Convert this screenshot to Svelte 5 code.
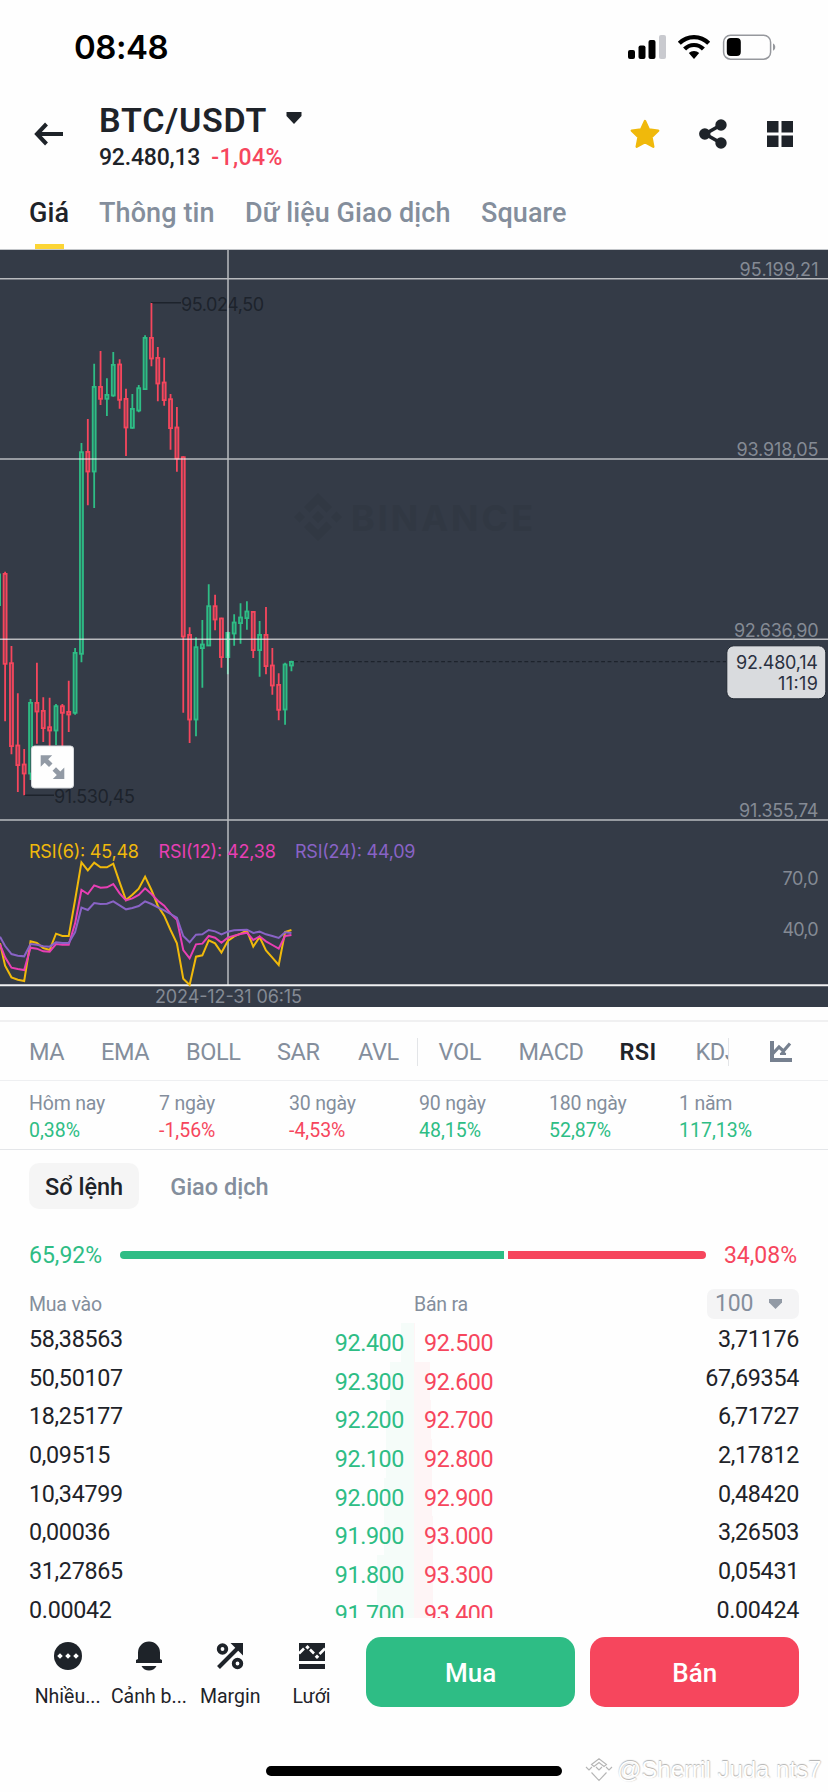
<script>
    const STEP = 6.363;
    const FIRST_X = 5.1;

    const tabs = ['Giá', 'Thông tin', 'Dữ liệu Giao dịch', 'Square'];
    const mainIndicators = ['MA', 'EMA', 'BOLL', 'SAR', 'AVL'];
    const subIndicators = ['VOL', 'MACD', 'RSI', 'KDJ'];

    const changes = [
        ['Hôm nay', '0,38%'],
        ['7 ngày', '-1,56%'],
        ['30 ngày', '-4,53%'],
        ['90 ngày', '48,15%'],
        ['180 ngày', '52,87%'],
        ['1 năm', '117,13%']
    ];

    // amount, bid, ask, amount, bid depth, ask depth
    const orders = [
        ['58,38563', '92.400', '92.500', '3,71176', 13, 1],
        ['50,50107', '92.300', '92.600', '67,69354', 24, 16],
        ['18,25177', '92.200', '92.700', '6,71727', 28, 17],
        ['0,09515', '92.100', '92.800', '2,17812', 28, 18],
        ['10,34799', '92.000', '92.900', '0,48420', 30, 18],
        ['0,00036', '91.900', '93.000', '3,26503', 30, 19],
        ['31,27865', '91.800', '93.300', '0,05431', 37, 19],
        ['0.00042', '91.700', '93.400', '0.00424', 37, 19]
    ];

    // up / down, wick top, body top, body bottom, wick bottom
    const candles = [
        ['d', 321.7, 323.7, 414, 471.3],
        ['d', 396, 413, 496.3, 504.3],
        ['d', 443.3, 495.3, 515.3, 542],
        ['d', 499, 514.3, 523.7, 545.3],
        ['u', 449, 452.7, 523.7, 530],
        ['d', 412.7, 452.7, 461.7, 493.7],
        ['d', 447.3, 460.7, 478.3, 492],
        ['d', 447.7, 477, 480.7, 510],
        ['u', 454, 456, 480.7, 495],
        ['d', 454, 456, 463, 510],
        ['d', 430.7, 461.7, 464.7, 482],
        ['u', 398, 402.7, 463, 464.7],
        ['u', 193, 202, 404, 412.3],
        ['d', 169, 201.7, 221.7, 255.3],
        ['u', 113.7, 136.7, 221.7, 258],
        ['d', 101, 136.7, 149, 155],
        ['u', 128.3, 144.7, 149, 166],
        ['u', 102, 114.7, 145.7, 146.7],
        ['d', 109.3, 114.3, 150, 158.7],
        ['d', 138.7, 148.7, 177.7, 206],
        ['u', 144, 158.7, 178, 178.7],
        ['u', 135, 138, 160.7, 162.3],
        ['u', 85.3, 87.7, 139.3, 140],
        ['d', 53, 87.7, 108.7, 116.3],
        ['d', 97, 107.7, 133.7, 151.3],
        ['d', 107.7, 132.3, 150.3, 155.7],
        ['d', 144, 149, 178.3, 199.7],
        ['d', 157, 177.3, 208.7, 221.7],
        ['d', 206.3, 207, 386.7, 462.7],
        ['d', 377.3, 384.7, 469.7, 493],
        ['u', 387.3, 397, 469.7, 486.3],
        ['u', 370, 394.3, 398.3, 437.7],
        ['u', 334.3, 356, 395.7, 396],
        ['d', 344.7, 356, 369.7, 380.3],
        ['d', 367.7, 368.3, 407.3, 417.7],
        ['u', 381.7, 382.7, 407.3, 424.3],
        ['u', 364.3, 372.3, 383.7, 395.7],
        ['u', 353.3, 367.3, 373.3, 393.7],
        ['u', 351.3, 361.3, 368.3, 379.7],
        ['d', 361.3, 361.7, 400.3, 408],
        ['u', 371, 384.7, 400.3, 426.7],
        ['d', 357, 384.7, 416.3, 424.3],
        ['d', 398, 415.3, 435.7, 444.7],
        ['d', 423.3, 434.7, 460, 470.3],
        ['u', 412.7, 414.3, 459.7, 474.7],
        ['u', 410.7, 411.7, 415.7, 421.3]
    ];
    const selected = 35;

    // first value sits on the left edge, the rest follow the candles
    const rsi6 = [400, 467, 502, 509, 513, 394, 399, 414, 420, 371, 378, 378, 270, 157, 181, 158, 172, 172, 161, 217, 270, 254, 236, 200, 240, 287, 317, 360, 400, 506, 525, 440, 436, 391, 400, 428, 393, 379, 371, 362, 410, 381, 421, 443, 465, 366, 360];
    const rsi12 = [403, 442, 473, 477, 480, 413, 416, 424, 425, 402, 404, 404, 340, 240, 252, 226, 233, 232, 222, 250, 271, 265, 255, 235, 252, 272, 287, 311, 329, 420, 445, 403, 401, 378, 383, 398, 383, 377, 372, 368, 390, 379, 394, 405, 416, 378, 375];
    const rsi24 = [380, 408, 432, 437, 439, 402, 404, 409, 410, 397, 399, 399, 366, 293, 300, 279, 282, 281, 274, 286, 298, 294, 288, 274, 282, 292, 301, 312, 323, 378, 397, 374, 373, 360, 364, 373, 365, 361, 360, 359, 369, 365, 373, 378, 384, 367, 369];

    function candleX(i) {
        return FIRST_X + STEP * i;
    }

    function linePoints(values) {
        return values.map((v, i) => `${i ? candleX(i - 1) : 0},${560 + v / 3}`).join(' ');
    }
</script>

<main>
    <div class="status">
        <span class="time">08:48</span>
        <svg class="status-icons" width="150" height="28" viewBox="0 0 150 28">
            <rect x="1" y="17" width="7" height="9" rx="2" />
            <rect x="11.5" y="12.500" width="7" height="13.500" rx="2" />
            <rect x="21.500" y="7" width="7" height="19" rx="2" />
            <rect x="32" y="2" width="7" height="24" rx="2" fill="#c9cacf" />
            <g fill="none" stroke="#000" stroke-width="4.200">
                <path d="M52.300 10.300a20.500 20.500 0 0 1 29.400 0" />
                <path d="M57.600 16a13 13 0 0 1 18.800 0" />
            </g>
            <path d="M61.800 20a7.600 7.600 0 0 1 10.400 0L67 26z" />
            <rect x="96.600" y="2.200" width="47" height="24" rx="7" fill="none" stroke="#96989d" stroke-width="1.500" />
            <rect x="99.800" y="5" width="14" height="18" rx="4" />
            <path d="M146 10.500c3 1.200 3 6 0 7.200z" fill="#96989d" />
        </svg>
    </div>

    <header>
        <svg class="back" width="30" height="24" viewBox="0 0 30 24" fill="none" stroke="#1e2329" stroke-width="4">
            <path d="M12.500 2L3 12l9.500 10M3 12h26" />
        </svg>
        <div class="pair">
            <h1>
                BTC/USDT
                <svg width="16" height="12" viewBox="0 0 16 12"><path d="M.5 0h15v4L8 12 .5 4z" fill="#1e2329" /></svg>
            </h1>
            <div class="last"><span>92.480,13</span><span class="down pct">-1,04%</span></div>
        </div>
        <div class="actions">
            <svg width="30" height="30" viewBox="0 0 30 30"><path d="M15 2l3.900 8.400 9.300 1.300-6.700 6.500 1.800 9.500L15 23.200l-8.300 4.500 1.800-9.500-6.700-6.500 9.300-1.300z" fill="#f0b90b" stroke="#f0b90b" stroke-width="2.400" stroke-linejoin="round" /></svg>
            <svg width="30" height="30" viewBox="0 0 30 30" fill="#1e2329">
                <path d="M23 6L7 15l16 9" fill="none" stroke="#1e2329" stroke-width="3.600" />
                <circle cx="23" cy="6" r="5.700" /><circle cx="6.800" cy="15" r="5.700" /><circle cx="23" cy="24" r="5.700" />
            </svg>
            <svg width="28" height="28" viewBox="0 0 28 28" fill="#1e2329">
                <path d="M1 1h11.500v11.500H1zM15.500 1H27v11.500H15.500zM1 15.500h11.500V27H1zM15.500 15.500H27V27H15.500z" />
            </svg>
        </div>
    </header>

    <nav class="tabs">
        {#each tabs as tab, i}
            <span class:active={i === 0}>{tab}</span>
        {/each}
    </nav>

    <section class="chart">
        <svg width="828" height="757" viewBox="0 0 828 757">
            <g class="brand">
                <path d="M318 243l14 14-5.500 5.500-8.500-8.500-8.500 8.500L304 257zM318 291l14-14-5.500-5.500-8.500 8.500-8.500-8.500L304 277zM299.500 261.500l5.500 5.500-5.500 5.500-5.500-5.500zM336.500 261.500l5.500 5.500-5.500 5.500-5.500-5.500zM318 261l6 6-6 6-6-6z" />
                <text x="351" y="280.700" textLength="182">BINANCE</text>
            </g>

            <g class="label-dark">
                <path d="M151 52.800h30M24 545.300h30" />
                <text x="181" y="60.500" textLength="83">95.024,50</text>
                <text x="54" y="553" textLength="81">91.530,45</text>
            </g>

            <path class="last-line" d="M294 411.700h432" />

            {#each candles as [dir, high, top, bottom, low], i}
                <g class={dir === 'u' ? 'candle rise' : 'candle fall'} class:solid={i === selected}>
                    <path d="M{candleX(i)} {high}V{top}M{candleX(i)} {bottom}V{low}" />
                    <rect x={candleX(i) - 1.5} y={top + 0.2} width="3" height={Math.max(bottom - top - 0.4, 1)} />
                </g>
            {/each}
            <path d="M0 323.500V356" stroke="#2ebd85" stroke-width="2" />

            <path class="grid-line" d="M0 28.700h828M0 209h828M0 389.300h828M0 570h828M228 0v735" />
            <path d="M0 735.300h828" stroke="#f0f1f2" stroke-width="2" />

            <g class="axis">
                <text x="818.500" y="25.700" textLength="79">95.199,21</text>
                <text x="818.500" y="206" textLength="82">93.918,05</text>
                <text x="818.500" y="386.500" textLength="84.500">92.636,90</text>
                <text x="818.500" y="567" textLength="79.500">91.355,74</text>
                <text x="818.500" y="635" textLength="36">70,0</text>
                <text x="818.500" y="685.700" textLength="36">40,0</text>
                <text x="302" y="753.300" textLength="147">2024-12-31 06:15</text>
            </g>

            <g class="rsi">
                <text x="29" y="608.300" textLength="110" fill="#f0b90b">RSI(6): 45,48</text>
                <text x="158.500" y="608.300" textLength="117.500" fill="#e83fb4">RSI(12): 42,38</text>
                <text x="295" y="608.300" textLength="120.500" fill="#8963c6">RSI(24): 44,09</text>
                <polyline points={linePoints(rsi6)} stroke="#f0b90b" />
                <polyline points={linePoints(rsi12)} stroke="#e83fb4" />
                <polyline points={linePoints(rsi24)} stroke="#8963c6" />
            </g>

            <g class="price-tag">
                <rect x="726.800" y="395.800" width="99" height="53" rx="7" />
                <text x="818" y="418.700" textLength="82">92.480,14</text>
                <text x="818" y="440" textLength="40">11:19</text>
            </g>

            <g>
                <rect x="31.500" y="496" width="42" height="42" rx="3" fill="#fefefe" stroke="#d5d8dc" />
                <path d="M40.700 505.300h11.500l-4 4 4.300 4.300-3.500 3.500-4.300-4.300-4 4zM64.300 529H52.800l4-4-4.300-4.300 3.500-3.500 4.300 4.300 4-4z" fill="#929aa5" />
            </g>
        </svg>
    </section>

    <section class="indicators">
        <div class="list">
            {#each mainIndicators as name}
                <span>{name}</span>
            {/each}
            <i></i>
            {#each subIndicators as name}
                <span class:active={name === 'RSI'}>{name}</span>
            {/each}
        </div>
        <svg width="22" height="22" viewBox="0 0 22 22">
            <path d="M2 0v19h20" fill="none" stroke="#76808f" stroke-width="4" />
            <path d="M2.500 13L9 6l4.500 4L20 2.500" fill="none" stroke="#76808f" stroke-width="3.200" />
            <path d="M13 9.500l3 3.500h-6zM10 13.500h6" fill="#76808f" stroke="#76808f" />
        </svg>
    </section>

    <section class="changes">
        {#each changes as [label, value]}
            <div>
                <span>{label}</span>
                <b class={value[0] === '-' ? 'down' : 'up'}>{value}</b>
            </div>
        {/each}
    </section>

    <nav class="book-tabs">
        <span class="active">Sổ lệnh</span>
        <span>Giao dịch</span>
    </nav>

    <section class="ratio">
        <span class="up">65,92%</span>
        <div class="bar"><i class="buy-part"></i><i class="sell-part"></i></div>
        <span class="down">34,08%</span>
    </section>

    <section class="book-head">
        <span>Mua vào</span>
        <span>Bán ra</span>
        <div class="step">
            100
            <svg width="13" height="10" viewBox="0 0 13 10"><path d="M0 0h13v3.500L6.500 10 0 3.500z" fill="#929aa5" /></svg>
        </div>
    </section>

    <section class="book">
        {#each orders as [buyAmount, bid, ask, sellAmount, bidDepth, askDepth]}
            <div class="row">
                <div class="side">
                    <span class="amount">{buyAmount}</span>
                    <span class="price up">{bid}</span>
                    <i class="depth" style:width={bidDepth + 'px'}></i>
                </div>
                <div class="side ask">
                    <i class="depth" style:width={askDepth + 'px'}></i>
                    <span class="price down">{ask}</span>
                    <span class="amount">{sellAmount}</span>
                </div>
            </div>
        {/each}
    </section>

    <footer>
        <div class="tool">
            <svg width="28" height="30" viewBox="0 0 28 30">
                <circle cx="14" cy="15" r="14" fill="#1e2329" />
                <path d="M6 12.200l2.800 2.800L6 17.800 3.200 15zM14 12.200l2.800 2.800-2.800 2.800-2.800-2.800zM22 12.200l2.800 2.800-2.800 2.800-2.800-2.800z" fill="#fff" />
            </svg>
            <span>Nhiều...</span>
        </div>
        <div class="tool">
            <svg width="28" height="30" viewBox="0 0 28 30" fill="#1e2329">
                <path d="M3 18v-6.500a11 11 0 0 1 22 0V18l2 1v3H1v-3zM6.500 25h15c-3 6-12 6-15 0z" />
            </svg>
            <span>Cảnh b...</span>
        </div>
        <div class="tool">
            <svg width="28" height="30" viewBox="0 0 28 30" fill="none" stroke="#1e2329" stroke-width="3.800">
                <circle cx="6.500" cy="8" r="3.800" /><circle cx="21.500" cy="22.500" r="3.800" />
                <path d="M2.500 26.500L22 7" stroke-width="4" />
                <path d="M14.500 2H27v12.500z" fill="#1e2329" stroke="none" />
            </svg>
            <span>Margin</span>
        </div>
        <div class="tool">
            <svg width="28" height="30" viewBox="0 0 28 30">
                <path d="M1 2h26v18H1zM1 23h26v5H1z" fill="#1e2329" />
                <path d="M1 12.500l5-5M12 8.500l4 4M21.500 13L27 7.500" fill="none" stroke="#fff" stroke-width="2.600" />
                <path d="M9.500 4l2.300 2.300-2.300 2.300-2.300-2.300zM19 13.500l2.300 2.300-2.300 2.300-2.300-2.300z" fill="#fff" />
            </svg>
            <span>Lưới</span>
        </div>
        <button class="buy">Mua</button>
        <button class="sell">Bán</button>
    </footer>

    <div class="home"></div>
    <div class="author">
        <svg width="28" height="24" viewBox="0 0 28 24" fill="none" stroke="#b5b5b5" stroke-width="1.100">
            <path d="M6.500 6.500L14 .8l7.500 5.700-2.500 2-5-4-5 4zM1 9l3 3 3-3M11 9l3 3 3-3M21 9l3 3 3-3M6.500 14.500L14 22.500l7.500-8" />
        </svg>
        <span>@Sherril Juda nts7</span>
    </div>
</main>

<style>
    :global(body) {
        background: #fff;
    }
    main {
        position: relative;
        width: 828px;
        height: 1792px;
        overflow: hidden;
        box-sizing: border-box;
        background: #fefefe;
        color: #1e2329;
        font-family: Roboto, "Noto Sans", sans-serif;
    }
    .up {
        color: #2ebd85;
    }
    .down {
        color: #f6465d;
    }
    .status {
        display: flex;
        align-items: center;
        justify-content: space-between;
        height: 94px;
        padding: 0 51px 0 74px;
    }
    .time {
        font: 600 33px Inter, sans-serif;
        letter-spacing: -.5px;
        color: #000;
    }
    header {
        display: flex;
        align-items: center;
        height: 79px;
        padding: 0 34px;
    }
    .pair {
        align-self: flex-start;
        margin: 7px 0 0 35px;
    }
    h1 {
        margin: 0;
        font-size: 34px;
        font-weight: 600;
        line-height: 38px;
        letter-spacing: .8px;
    }
    h1 svg {
        margin-left: 10px;
        vertical-align: 8px;
    }
    .last {
        display: flex;
        gap: 11px;
        font-size: 23px;
        font-weight: 500;
        line-height: 38px;
        letter-spacing: -.2px;
    }
    .last .pct {
        letter-spacing: .4px;
    }
    .actions {
        display: flex;
        align-items: center;
        gap: 38px;
        margin-left: auto;
    }
    .tabs {
        display: grid;
        grid-template-columns: 70px 146px 236px 200px;
        height: 76px;
        padding-left: 29px;
        font-size: 27px;
        font-weight: 500;
        line-height: 81px;
        letter-spacing: .1px;
        color: #848e9c;
        white-space: nowrap;
    }
    .tabs .active {
        position: relative;
        color: #1e2329;
    }
    .tabs .active::after {
        content: '';
        position: absolute;
        left: 6px;
        top: 71px;
        width: 29px;
        height: 5px;
        background: #fcd535;
    }
    .chart {
        height: 757px;
        border-top: 1px solid #c2c5c9;
        background: #343b47;
        font-family: Inter, sans-serif;
        font-size: 18px;
    }
    .chart svg {
        display: block;
    }
    .brand {
        fill: #313843;
        font-size: 36px;
        font-weight: 700;
    }
    .label-dark {
        fill: #1d232c;
        stroke: none;
    }
    .label-dark path {
        stroke: #1d232c;
        stroke-width: 1.5;
    }
    .last-line {
        stroke: #1d232c;
        stroke-width: 1.2;
        stroke-dasharray: 3.800 2.600;
    }
    .candle {
        stroke-width: 1.8;
    }
    .rise {
        stroke: #2ebd85;
        fill: #2f6f60;
    }
    .rise.solid {
        fill: #5fd0a0;
    }
    .fall {
        stroke: #f6465d;
        fill: #7d3f50;
    }
    .grid-line {
        stroke: #fff;
        stroke-opacity: .65;
        stroke-width: 1.500;
    }
    .axis {
        fill: #848a94;
        text-anchor: end;
    }
    .rsi polyline {
        fill: none;
        stroke-width: 2;
    }
    .price-tag {
        text-anchor: end;
        fill: #2a3040;
    }
    .price-tag rect {
        fill: #d9dbde;
        stroke: #1e2530;
    }
    .indicators {
        display: flex;
        align-items: center;
        height: 61px;
        margin-top: 13px;
        padding-top: 2px;
        box-sizing: border-box;
        border-top: 2px solid #f0f0f1;
        border-bottom: 1px solid #eeeff1;
        font-size: 23.500px;
        letter-spacing: -.4px;
        color: #848e9c;
    }
    .list {
        display: grid;
        grid-template-columns: 72px 85px 91px 81px 59px 21.500px 80px 101px 76px 40px;
        align-items: center;
        width: 699px;
        margin-left: 29px;
        overflow: hidden;
        border-right: 1px solid #e3e5e8;
    }
    .list i {
        width: 1px;
        height: 28px;
        background: #e3e5e8;
    }
    .list .active {
        font-weight: 600;
        letter-spacing: .4px;
        color: #1e2329;
    }
    .indicators svg {
        margin-left: 41px;
    }
    .changes {
        display: grid;
        grid-template-columns: repeat(6, 130px);
        height: 59px;
        padding: 9px 0 0 29px;
        border-bottom: 1px solid #e4e6e9;
        font-size: 19.500px;
        letter-spacing: -.2px;
        color: #848e9c;
    }
    .changes span,
    .changes b {
        display: block;
        font-weight: 400;
        line-height: 27px;
    }
    .changes b {
        line-height: 27px;
        letter-spacing: 0;
    }
    .book-tabs {
        display: flex;
        gap: 15px;
        margin: 13px 0 0 29px;
        font-size: 23.500px;
        font-weight: 500;
        line-height: 46px;
        color: #848e9c;
    }
    .book-tabs span {
        height: 46px;
        padding: 1px 16px 0;
        box-sizing: border-box;
        border-radius: 10px;
    }
    .book-tabs .active {
        background: #f5f5f5;
        color: #1e2329;
    }
    .ratio {
        display: flex;
        align-items: center;
        justify-content: space-between;
        height: 28px;
        margin: 32px 31px 0 29px;
        font-size: 23px;
    }
    .ratio span {
        padding-top: 1px;
    }
    .bar {
        display: flex;
        gap: 4px;
        width: 586px;
        height: 8px;
    }
    .buy-part {
        flex: 65.920;
        border-radius: 4px 0 0 4px;
        background: #2ebd85;
    }
    .sell-part {
        flex: 34.080;
        border-radius: 0 4px 4px 0;
        background: #f6465d;
    }
    .book-head {
        display: grid;
        grid-template-columns: 385px 293px 92px;
        align-items: center;
        height: 30px;
        margin: 20px 0 4px 29px;
        font-size: 19.500px;
        letter-spacing: -.2px;
        color: #848e9c;
    }
    .step {
        display: flex;
        align-items: center;
        justify-content: space-between;
        height: 30px;
        padding: 0 17px 0 8px;
        box-sizing: border-box;
        border-radius: 7px;
        background: #f4f4f5;
        font-size: 23px;
        line-height: 32px;
    }
    .book {
        height: 294.700px;
        overflow: hidden;
        font-size: 23.300px;
    }
    .row {
        display: grid;
        grid-template-columns: 414px 414px;
        height: 38.670px;
    }
    .side {
        position: relative;
        display: flex;
        justify-content: space-between;
        padding: 0 10px 0 29px;
    }
    .side.ask {
        padding: 0 29px 0 10px;
    }
    .amount {
        line-height: 32.500px;
        letter-spacing: -.3px;
    }
    .price {
        position: relative;
        z-index: 1;
        line-height: 41px;
        letter-spacing: -.4px;
    }
    .depth {
        position: absolute;
        top: 0;
        right: 0;
        height: 100%;
        background: #f5fcf9;
    }
    .ask .depth {
        left: 0;
        right: auto;
        background: #fef5f6;
    }
    footer {
        display: flex;
        align-items: flex-start;
        height: 70px;
        margin-top: 19px;
        padding-left: 27px;
    }
    .tool {
        display: flex;
        flex-direction: column;
        align-items: center;
        width: 81.300px;
        padding-top: 4px;
        font-size: 19.500px;
        white-space: nowrap;
    }
    .tool span {
        margin-top: 13px;
        line-height: 26px;
    }
    button {
        width: 209px;
        height: 70px;
        margin-left: 14px;
        padding: 2px 0 0;
        border: 0;
        border-radius: 15px;
        color: #fff;
        font: 500 26px Roboto, sans-serif;
    }
    .buy {
        background: #2ebd85;
    }
    .sell {
        margin-left: 15px;
        background: #f6465d;
    }
    .home {
        width: 296px;
        height: 10px;
        margin: 59px auto 0;
        border-radius: 5px;
        background: #000;
    }
    .author {
        position: absolute;
        left: 585px;
        top: 1756px;
        display: flex;
        align-items: center;
        gap: 4px;
        font: 24px/28px "Liberation Sans", sans-serif;
        color: #fff;
        text-shadow: 0 -1px 1px #b0b0b0, 1px 0 1px #d5d5d5;
        white-space: nowrap;
    }
</style>
